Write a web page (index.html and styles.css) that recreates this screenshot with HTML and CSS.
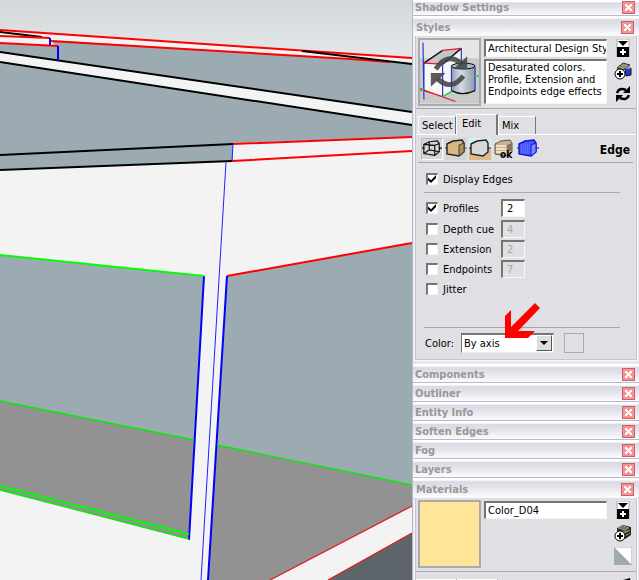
FILE: index.html
```html
<!DOCTYPE html>
<html lang="en">
<head>
<meta charset="utf-8">
<title>Styles</title>
<link rel="stylesheet" href="styles.css">
</head>
<body>
<main class="app">
  <svg class="model" viewBox="0 0 412 580" preserveAspectRatio="xMinYMin slice" aria-label="Model view">
    <defs>
      <linearGradient id="sky" x1="0" y1="0" x2="0" y2="1"><stop offset="0" stop-color="#d2d7da"/><stop offset="1" stop-color="#e4e8e9"/></linearGradient>
    </defs>
    <rect width="412" height="580" fill="#f3f3f3"/>
    <path d="M0 0H412V59L0 31Z" fill="url(#sky)"/>
    <path d="M0 43L56 46L50 40L412 63V137L233 143V161L0 170Z" fill="#9caab1"/>
    <path d="M0 52L412 112V125L0 62Z" fill="#f3f3f3"/>
    <path d="M0 255L204 276L194 440L0 401Z" fill="#9caab1"/>
    <path d="M0 401L194 440L189 539L0 490Z" fill="#929292"/>
    <path d="M227 276L412 243V485L217 445Z" fill="#9caab1"/>
    <path d="M217 445L412 485V506L270 580H208Z" fill="#929292"/>
    <path d="M412 533V580H328Z" fill="#5d656b"/>
    <g fill="none" stroke-width="2">
      <path stroke="#000" d="M0 32L42 37M0 52L412 112M0 62L412 125M0 155L233 144M0 170L232 161"/>
      <path stroke="red" d="M0 30L412 58M0 36L50 38M50 41L350 59L390 62M0 43L58 46M233 144L412 137M232 161L412 151M227 276L412 243"/>
      <path stroke="#000" d="M302 51L412 64"/>
      <path stroke="#00f" d="M50 38V45M58 46V61M204 276L189 540M227 276L208 580"/>
      <path stroke="#0f0" d="M0 255L204 276M0 486L189 534"/>
    </g>
    <g fill="none" stroke-width="1">
      <path stroke="#22f" d="M233 144L232 161M226 162L201 580"/>
      <path stroke="#0e0" stroke-width="1.3" d="M0 401L194 440M217 445L412 485M0 490L189 539"/>
      <path stroke="#e02020" stroke-width="1.3" d="M270 580L412 506M328 580L412 533"/>
    </g>
  </svg>

  <aside class="tray">
    <section><header class="bar first"><h2>Shadow Settings</h2><button class="close" aria-label="Close"></button></header></section>
    <section>
      <header class="bar open"><h2>Styles</h2><button class="close" aria-label="Close"></button></header>
      <div class="body styles">
        <div class="summary">
          <button class="thumb" aria-label="Update style">
            <svg viewBox="0 0 60 64">
              <defs><linearGradient id="drum"><stop offset="0" stop-color="#93a3ad"/><stop offset=".4" stop-color="#d3dde3"/><stop offset="1" stop-color="#8c9aa4"/></linearGradient></defs>
              <rect width="60" height="64" fill="#e5e7e7"/><path d="M0 18H60V64H0Z" fill="#c9cbca"/>
              <path d="M4 23L23 10L42 8V43L23 57L4 51Z" fill="#f7f7f7"/>
              <path d="M4 23L23 10L42 8L23 24Z" fill="#c3c5c6"/>
              <path d="M32 26V51Q43 57 56 51V26Q43 22 32 26Z" fill="url(#drum)"/>
              <ellipse cx="44" cy="26" rx="12" ry="3" fill="#aebbc4" stroke="#000"/>
              <path d="M32 51Q43 57 56 51M4 23L23 10M42 8L23 24" fill="none" stroke="#111" stroke-width="1.4"/>
              <path d="M4 23L23 24M42 8L23 10M0 49L36 62M4 51L23 57" fill="none" stroke="#f11428" stroke-width="1.3"/>
              <path d="M3 2L4 60M4 23V51M23 24V57M42 8V25M56 27V51M32 27V51" fill="none" stroke="#2730df" stroke-width="1.2"/>
              <path d="M0 51L4 50M23 57L32 52M56 36H60" stroke="#28d436" stroke-width="1.5"/>
              <g fill="none" stroke="#444" stroke-width="5" opacity=".88"><path d="M16 29Q28 11 43 24M44 36Q32 52 18 39"/></g>
              <path d="M48 16V29H34ZM11 47V33H26Z" fill="#444" opacity=".88"/>
            </svg>
          </button>
          <div class="fields">
            <input class="field name" aria-label="Style name" value="Architectural Design Style">
            <textarea class="field desc" aria-label="Description">Desaturated colors.
Profile, Extension and
Endpoints edge effects</textarea>
          </div>
          <div class="tools">
            <button aria-label="Show secondary pane"><svg viewBox="0 0 18 18"><path d="M3 0H15V18H3Z" fill="#fff" stroke="#aaa"/><path d="M4 2H14L9 7Z"/><rect x="3" y="8" width="12" height="10"/><path d="M9 10V16M6 13H12" stroke="#fff" stroke-width="2"/></svg></button>
            <button aria-label="Create style"><svg viewBox="0 0 18 18"><path d="M3 6L9 1L16 3L9 8Z" fill="#999476" stroke="#333"/><path d="M3 6V10L9 12V8Z" fill="#444"/><path d="M11 6H17V13L12 14Z" fill="#2539d2" stroke="#112"/><ellipse cx="14" cy="6" rx="3" ry="1" fill="#8794ef"/><circle cx="6" cy="12" r="5" fill="#fff" stroke="#000"/><path d="M6 9V15M3 12H9" stroke="#000" stroke-width="2"/></svg></button>
            <button aria-label="Update style"><svg viewBox="0 0 18 18"><path d="M3 8Q5 2 12 5M15 10Q13 16 6 13" fill="none" stroke="#000" stroke-width="2.5"/><path d="M16 1V8H9ZM2 17V10H9Z"/></svg></button>
          </div>
        </div>
        <nav class="tabs"><button>Select</button><button class="active">Edit</button><button>Mix</button></nav>
        <div class="modes">
          <button class="pressed" aria-label="Edge settings"><svg viewBox="0 0 22 22"><path d="M2 6L8 3L17 2L19 5V14L14 18L2 16ZM2 6L14 7L19 5M14 7V18M8 3V12L2 16M8 12L19 14M0 10H3M19 10H22" fill="none" stroke="#111" stroke-width="1.3"/></svg></button>
          <button class="shade" aria-label="Face settings"><svg viewBox="0 0 22 22"><path d="M0 10H22" stroke="#555"/><path d="M2 6L8 3L17 2L19 5V14L14 18L2 16Z" fill="#d9b785" stroke="#222" stroke-width="1.4"/><path d="M14 7L19 5V14L14 18Z" fill="#b18e60" stroke="#443"/></svg></button>
          <button aria-label="Background settings"><svg viewBox="0 0 22 22"><path d="M0 0H22V10H0Z" fill="#cdf2ef"/><path d="M0 10H22V22H0Z" fill="#deb98a"/><path d="M0 10H22" stroke="#222"/><path d="M2 6L8 3L17 2L19 5V14L14 18L2 16Z" fill="#d8d9dc" stroke="#222" stroke-width="1.4"/></svg></button>
          <button aria-label="Watermark settings"><svg viewBox="0 0 22 22"><path d="M2 6L8 3L17 2L19 5V14L14 18L2 16Z" fill="#c8b18b" stroke="#555"/><path d="M3 8H13M3 11H13M3 14H13" stroke="#eee1c7" stroke-width="2"/><path d="M14 7L19 5V13H14Z" fill="#8c7458"/><text x="7" y="20">ok</text></svg></button>
          <button aria-label="Modeling settings"><svg viewBox="0 0 22 22"><path d="M0 10H22" stroke="#223"/><path d="M2 6L8 3L17 2L19 5V14L14 18L2 16Z" fill="#4555ff" stroke="#1111d8" stroke-width="1.4"/><path d="M14 7L19 5V14L14 18Z" fill="#7c91ff" stroke="#1111d8"/><path d="M4 7H13M4 9H13M4 11H13M4 13H13M4 15H13" stroke="#7181ff" stroke-dasharray="1 1"/></svg></button>
          <strong>Edge</strong>
        </div>
        <div class="settings">
          <label class="check display"><input type="checkbox" checked>Display Edges</label>
          <div class="row profiles"><label class="check"><input type="checkbox" checked>Profiles</label><input class="number" aria-label="Profiles width" value="2"></div>
          <div class="row"><label class="check"><input type="checkbox">Depth cue</label><input class="number" aria-label="Depth cue width" value="4" disabled></div>
          <div class="row"><label class="check"><input type="checkbox">Extension</label><input class="number" aria-label="Extension length" value="2" disabled></div>
          <div class="row"><label class="check"><input type="checkbox">Endpoints</label><input class="number" aria-label="Endpoints length" value="7" disabled></div>
          <div class="row"><label class="check"><input type="checkbox">Jitter</label></div>
          <div class="color">
            <label for="axis">Color:</label>
            <div class="combo"><select id="axis"><option>By axis</option></select><span class="drop"></span>
              <svg class="pointer" viewBox="0 0 36 36"><path d="M30 0L35 5L13 28H30L23 35H0V13L6 7V24Z" fill="red"/></svg>
            </div>
            <button class="swatch" aria-label="Edge color"></button>
          </div>
        </div>
      </div>
    </section>
    <section><header class="bar"><h2>Components</h2><button class="close" aria-label="Close"></button></header></section>
    <section><header class="bar"><h2>Outliner</h2><button class="close" aria-label="Close"></button></header></section>
    <section><header class="bar"><h2>Entity Info</h2><button class="close" aria-label="Close"></button></header></section>
    <section><header class="bar"><h2>Soften Edges</h2><button class="close" aria-label="Close"></button></header></section>
    <section><header class="bar"><h2>Fog</h2><button class="close" aria-label="Close"></button></header></section>
    <section><header class="bar"><h2>Layers</h2><button class="close" aria-label="Close"></button></header></section>
    <section>
      <header class="bar open"><h2>Materials</h2><button class="close" aria-label="Close"></button></header>
      <div class="body materials">
        <div class="summary">
          <button class="thumb sand" aria-label="Material preview"></button>
          <div class="fields"><input class="field name" aria-label="Material name" value="Color_D04"></div>
          <div class="tools">
            <button aria-label="Show secondary pane"><svg viewBox="0 0 18 18"><path d="M3 0H15V18H3Z" fill="#fff" stroke="#aaa"/><path d="M4 2H14L9 7Z"/><rect x="3" y="8" width="12" height="10"/><path d="M9 10V16M6 13H12" stroke="#fff" stroke-width="2"/></svg></button>
            <button aria-label="Create material"><svg viewBox="0 0 18 18"><path d="M3 4L9 1L17 3V11L11 15L3 12Z" fill="#28241f"/><path d="M4 4L9 2L15 4L11 6ZM4 7L11 9L16 6M11 12L16 9" fill="#7b715f" stroke="#9b927f"/><circle cx="6" cy="12" r="5" fill="#fff" stroke="#000"/><path d="M6 9V15M3 12H9" stroke="#000" stroke-width="2"/></svg></button>
            <button aria-label="Default material"><svg viewBox="0 0 18 18"><rect width="18" height="18" fill="#fff"/><path d="M0 0L18 18H0Z" fill="#9eabb3"/><path d="M0 0H18V18H0Z" fill="none" stroke="#aaa"/></svg></button>
          </div>
        </div>
        <div class="lower"><nav class="tabs"><button aria-label="Select"></button><button aria-label="Edit"></button></nav><button class="dropper" aria-label="Sample paint"><svg viewBox="0 0 18 18"><path d="M16 0L9 2L8 5L6 5L12 11L13 8L17 5ZM8 7L2 13L1 17L5 15L11 9Z"/></svg></button></div>
      </div>
    </section>
  </aside>
</main>
</body>
</html>
```
FILE: styles.css
```css
* { box-sizing: border-box; }
body { margin: 0; font: 11px/13px "DejaVu Sans Condensed", "DejaVu Sans", sans-serif; color: #000; }
button, input, select, textarea { font: inherit; color: inherit; margin: 0; padding: 0; border-radius: 0; }
button { background: none; border: 0; }
svg { display: block; }
h2 { margin: 0; }
.app { display: grid; grid-template-columns: minmax(0, 1fr) 227px; grid-template-rows: minmax(0, 1fr); height: 100vh; overflow: hidden; }
.model { width: 100%; height: 100%; }
.tray { background: #e7e7ed; border-left: 1px solid #b9b8c9; min-width: 0; }
.bar { height: 19px; display: flex; align-items: center; justify-content: space-between; padding: 2px 4px 0 2px; border-bottom: 1px solid #b8b8ce; background: linear-gradient(#fff 0 10%, #d9d9e4 20%, #e3e3eb 50%, #fcfcfe); }
.bar.first { height: 16px; padding-top: 0; }
.bar.open { height: 20px; padding: 3px 5px 0 3px; border-bottom-color: #d0d0dd; }
.bar h2 { font: bold 11px/13px "DejaVu Sans Condensed", "DejaVu Sans", sans-serif; color: #989898; }
.close { width: 13px; height: 13px; border: 1px solid #b96670; background: linear-gradient(45deg, transparent 40%, #fff 40% 60%, transparent 60%) center / 7px 7px no-repeat, linear-gradient(-45deg, transparent 40%, #fff 40% 60%, transparent 60%) center / 7px 7px no-repeat, #ff9090; }
.body { margin: 0 2px; border: solid #c6c6d3; border-width: 0 1px; background: #e0dfe4; box-shadow: 0 0 0 1px #f8f8fc; }
.styles { height: 324px; border-bottom-width: 1px; margin-bottom: 4px; }
.summary { display: flex; gap: 3px; height: 73px; padding: 2px 4px 4px 2px; border-bottom: 1px solid #a8a8ad; }
.materials .summary { height: 74px; }
.thumb { width: 63px; height: 68px; border: 2px solid #a9a9ae; flex: none; }
.thumb svg { width: 100%; height: 100%; }
.sand { background: #ffe599; }
.fields { display: flex; flex-direction: column; gap: 2px; flex: 1; min-width: 0; padding-top: 1px; }
.field { display: block; width: 100%; background: #fff; border: 1px solid #f7f6f0; border-top: 2px solid #77756f; border-left: 2px solid #77756f; padding: 0 0 0 2px; resize: none; overflow: hidden; }
.name { height: 18px; }
.desc { height: 46px; line-height: 12px; padding-top: 1px; white-space: pre; }
.tools { display: flex; flex-direction: column; gap: 5px; width: 22px; align-items: flex-end; padding-top: 1px; }
.tools svg { width: 18px; height: 18px; }
.tabs { display: flex; align-items: flex-end; height: 26px; padding-left: 2px; border-bottom: 1px solid #fff; }
.tabs button { height: 18px; width: 38px; text-align: left; padding-left: 3px; border-top: 1px solid #fff; border-left: 1px solid #fff; border-right: 1px solid #777; }
.tabs .active { height: 21px; width: 42px; padding: 0 0 3px 5px; border-right-width: 2px; margin-bottom: -1px; background: #e0dfe4; }
.modes { display: flex; align-items: center; gap: 2px; height: 28px; margin: 0 3px 0 2px; padding: 0 3px; border-bottom: 1px solid #a5a5aa; }
.modes button { width: 22px; height: 22px; }
.modes .pressed { border: 1px solid #bbb; border-right-color: #fff; border-bottom-color: #fff; background: #d6d6d8; }
.modes .shade { background: #d6d4d5; }
.modes text { font: bold 10px "DejaVu Sans Condensed", sans-serif; }
.modes strong { margin-left: auto; padding-top: 4px; font-size: 12px; }
.settings { padding: 0 16px 0 8px; }
.check { display: flex; align-items: center; gap: 5px; }
.check input { appearance: none; flex: none; width: 12px; height: 12px; background: #fff; border: 1px solid #f5f4ef; border-top: 2px solid #77756f; border-left: 2px solid #77756f; }
.check input:checked::before { content: ""; display: block; width: 8px; height: 8px; background: #000; clip-path: polygon(0 30%, 38% 65%, 100% 0, 100% 38%, 38% 100%, 0 65%); }
.display { height: 30px; padding: 3px 0 0 2px; border-bottom: 1px solid #aaaab0; }
.row { display: flex; align-items: center; height: 20px; padding-left: 2px; }
.row .check { width: 75px; }
.profiles { height: 22px; margin-top: 4px; }
.number { width: 24px; height: 18px; padding: 0 4px; background: #fff; border: 1px solid #f8f8f4; border-top: 2px solid #77756f; border-left: 2px solid #77756f; }
.number:disabled { background: #e0dfe4; color: #aaa69c; }
.color { display: flex; align-items: center; height: 31px; margin-top: 28px; border-top: 1px solid #a5a5aa; }
.color label { width: 37px; padding-left: 1px; }
.combo { position: relative; width: 93px; height: 20px; }
.combo select { appearance: none; width: 100%; height: 20px; padding-left: 2px; background: #fff; border: 1px solid #eee; border-top: 2px solid #77756f; border-left: 1px solid #77756f; }
.drop { position: absolute; right: 2px; top: 2px; width: 16px; height: 16px; background: #dedee0; border: 1px solid #fff; border-right-color: #555; border-bottom-color: #555; pointer-events: none; }
.drop::before { content: ""; position: absolute; left: 3px; top: 5px; border: 4px solid transparent; border-top-color: #000; }
.pointer { position: absolute; left: 44px; top: -30px; width: 36px; height: 36px; pointer-events: none; }
.swatch { width: 20px; height: 20px; margin-left: 10px; border: 1px solid #aaa; }
.lower { display: flex; justify-content: space-between; }
.lower .tabs { flex: 1; padding-left: 0; }
.lower .tabs button { width: 41px; }
.dropper { width: 22px; padding-top: 3px; }
.dropper svg { width: 18px; height: 18px; }
```
